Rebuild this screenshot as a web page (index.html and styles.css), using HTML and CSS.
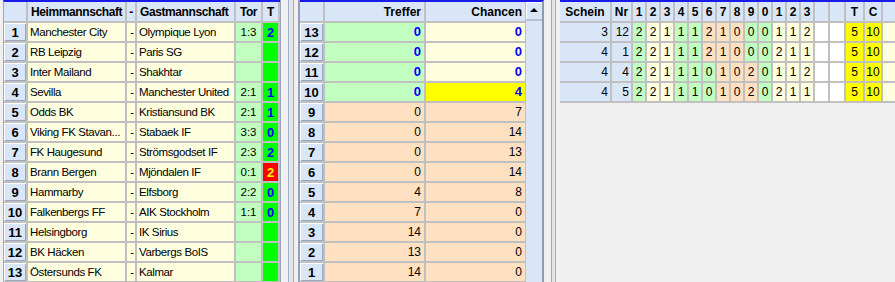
FILE: index.html
```html
<!DOCTYPE html>
<html lang="de">
  <head>
    <meta charset="UTF-8" />
    <title>Toto Auswertung</title>
    <link rel="stylesheet" href="styles.css">
  </head>
  <body>
    <div class="screen">
      <!-- Spielpaarungen -->
      <div class="panel matches">
        <div class="hd"></div><div class="hd left">Heimmannschaft</div><div class="hd mid">-</div><div class="hd left">Gastmannschaft</div><div class="hd mid">Tor</div><div class="hd mid">T</div>

        <div class="num">1</div><div class="team">Manchester City</div><div class="team mid">-</div><div class="team">Olympique Lyon</div><div class="goal">1:3</div><div class="tend">2</div>
        <div class="num">2</div><div class="team">RB Leipzig</div><div class="team mid">-</div><div class="team">Paris SG</div><div class="goal"></div><div class="tend"></div>
        <div class="num">3</div><div class="team">Inter Mailand</div><div class="team mid">-</div><div class="team">Shakhtar</div><div class="goal"></div><div class="tend"></div>
        <div class="num">4</div><div class="team">Sevilla</div><div class="team mid">-</div><div class="team">Manchester United</div><div class="goal">2:1</div><div class="tend">1</div>
        <div class="num">5</div><div class="team">Odds BK</div><div class="team mid">-</div><div class="team">Kristiansund BK</div><div class="goal">2:1</div><div class="tend">1</div>
        <div class="num">6</div><div class="team">Viking FK Stavan...</div><div class="team mid">-</div><div class="team">Stabaek IF</div><div class="goal">3:3</div><div class="tend">0</div>
        <div class="num">7</div><div class="team">FK Haugesund</div><div class="team mid">-</div><div class="team">Strömsgodset IF</div><div class="goal">2:3</div><div class="tend">2</div>
        <div class="num">8</div><div class="team">Brann Bergen</div><div class="team mid">-</div><div class="team">Mjöndalen IF</div><div class="goal">0:1</div><div class="tend alarm">2</div>
        <div class="num">9</div><div class="team">Hammarby</div><div class="team mid">-</div><div class="team">Elfsborg</div><div class="goal">2:2</div><div class="tend">0</div>
        <div class="num">10</div><div class="team">Falkenbergs FF</div><div class="team mid">-</div><div class="team">AIK Stockholm</div><div class="goal">1:1</div><div class="tend">0</div>
        <div class="num">11</div><div class="team">Helsingborg</div><div class="team mid">-</div><div class="team">IK Sirius</div><div class="goal"></div><div class="tend"></div>
        <div class="num">12</div><div class="team">BK Häcken</div><div class="team mid">-</div><div class="team">Varbergs BoIS</div><div class="goal"></div><div class="tend"></div>
        <div class="num">13</div><div class="team">Östersunds FK</div><div class="team mid">-</div><div class="team">Kalmar</div><div class="goal"></div><div class="tend"></div>
      </div>

      <div class="splitter first"></div>

      <!-- Treffer / Chancen -->
      <div class="panel stats-panel">
        <div class="stats">
          <div class="hd"></div><div class="hd right">Treffer</div><div class="hd right">Chancen</div>

          <div class="num">13</div><div class="hit open">0</div><div class="chance open">0</div>
          <div class="num">12</div><div class="hit open">0</div><div class="chance open">0</div>
          <div class="num">11</div><div class="hit open">0</div><div class="chance open">0</div>
          <div class="num">10</div><div class="hit open">0</div><div class="chance open best">4</div>
          <div class="num">9</div><div class="miss">0</div><div class="miss">7</div>
          <div class="num">8</div><div class="miss">0</div><div class="miss">14</div>
          <div class="num">7</div><div class="miss">0</div><div class="miss">13</div>
          <div class="num">6</div><div class="miss">0</div><div class="miss">14</div>
          <div class="num">5</div><div class="miss">4</div><div class="miss">8</div>
          <div class="num">4</div><div class="miss">7</div><div class="miss">0</div>
          <div class="num">3</div><div class="miss">14</div><div class="miss">0</div>
          <div class="num">2</div><div class="miss">13</div><div class="miss">0</div>
          <div class="num">1</div><div class="miss">14</div><div class="miss">0</div>
        </div>
        <div class="scrollbar">
          <div class="scroll-up"><span class="arrow"></span></div>
        </div>
      </div>

      <div class="splitter second"></div>

      <!-- Tippscheine -->
      <div class="panel tips-panel">
        <div class="tips">
          <div class="hd">Schein</div><div class="hd">Nr</div>
          <div class="hd">1</div><div class="hd">2</div><div class="hd">3</div><div class="hd">4</div><div class="hd">5</div><div class="hd">6</div><div class="hd">7</div><div class="hd">8</div><div class="hd">9</div><div class="hd">0</div><div class="hd">1</div><div class="hd">2</div><div class="hd">3</div>
          <div class="hd"></div><div class="hd"></div><div class="hd">T</div><div class="hd">C</div><div class="hd"></div>

          <div class="key">3</div><div class="key">12</div>
          <div class="ok">2</div><div class="wait">2</div><div class="wait">1</div><div class="ok">1</div><div class="ok">1</div><div class="bad">2</div><div class="bad">1</div><div class="bad">0</div><div class="ok">0</div><div class="ok">0</div><div class="wait">1</div><div class="wait">1</div><div class="wait">2</div>
          <div class="blank"></div><div class="blank"></div><div class="sum">5</div><div class="sum">10</div><div class="wait"></div>

          <div class="key">4</div><div class="key">1</div>
          <div class="ok">2</div><div class="wait">2</div><div class="wait">1</div><div class="ok">1</div><div class="ok">1</div><div class="bad">2</div><div class="bad">1</div><div class="bad">0</div><div class="ok">0</div><div class="ok">0</div><div class="wait">2</div><div class="wait">1</div><div class="wait">1</div>
          <div class="blank"></div><div class="blank"></div><div class="sum">5</div><div class="sum">10</div><div class="wait"></div>

          <div class="key">4</div><div class="key">4</div>
          <div class="ok">2</div><div class="wait">2</div><div class="wait">1</div><div class="ok">1</div><div class="ok">1</div><div class="ok">0</div><div class="bad">1</div><div class="bad">0</div><div class="bad">2</div><div class="ok">0</div><div class="wait">1</div><div class="wait">1</div><div class="wait">2</div>
          <div class="blank"></div><div class="blank"></div><div class="sum">5</div><div class="sum">10</div><div class="wait"></div>

          <div class="key">4</div><div class="key">5</div>
          <div class="ok">2</div><div class="wait">2</div><div class="wait">1</div><div class="ok">1</div><div class="ok">1</div><div class="ok">0</div><div class="bad">1</div><div class="bad">0</div><div class="bad">2</div><div class="ok">0</div><div class="wait">2</div><div class="wait">1</div><div class="wait">1</div>
          <div class="blank"></div><div class="blank"></div><div class="sum">5</div><div class="sum">10</div><div class="wait"></div>
        </div>
      </div>
    </div>
  </body>
</html>
```

FILE: styles.css
```css
body {
  margin: 0;
  background: #f0f0f0;
  font-family: "Liberation Sans", Arial, sans-serif;
  font-size: 12px;
  color: #000;
  overflow: hidden;
}

.screen {
  display: flex;
  height: 282px;
}

.panel {
  border-top: 2px solid #1a1aeb;
  flex: none;
}

/* shared grid look */
.matches,
.stats,
.tips {
  display: grid;
  gap: 2px;
  background: #c0c0c0;
  align-content: start;
  grid-template-rows: 19px;
  grid-auto-rows: 18px;
  line-height: 18px;
}

.matches > *,
.stats > *,
.tips > * {
  white-space: nowrap;
  overflow: hidden;
}

.hd {
  background: #d8e6f8;
  font-weight: bold;
  text-align: center;
  line-height: 20px;
}

.left {
  text-align: left;
  padding-left: 3px;
}

.right {
  text-align: right;
  padding-right: 3px;
}

.mid {
  text-align: center;
}

.num {
  background: #d8e6f8;
  font-weight: bold;
  font-size: 13px;
  line-height: 19px;
  text-align: center;
  box-shadow: inset 1px 1px #fff, inset -1px -1px #98a8c0;
}

/* left: matches */
.matches {
  margin-left: 3px;
  border-left: 1px solid #9aa8b8;
  padding-right: 2px;
  grid-template-columns: 22px 97px 8px 97px 25px 15px;
}

.matches .hd {
  letter-spacing: -0.4px;
}

.team {
  background: #ffffe0;
  padding-left: 2px;
  font-size: 11.5px;
  letter-spacing: -0.4px;
}

.goal {
  background: #c0ffc0;
  text-align: center;
  font-size: 11.5px;
}

.tend {
  background: #00ff00;
  color: #0000ff;
  font-weight: bold;
  font-size: 13px;
  line-height: 19px;
  text-align: center;
}

.tend.alarm {
  background: #ff0000;
  color: #ffff00;
}

.splitter {
  flex: none;
}

.splitter.first {
  width: 20px;
  background: linear-gradient(to right, #93a5bd 0 1px, #f0f0f0 1px 8px, #9db1cc 8px 9px, #e4e4e4 9px 13px, #a7a7a7 13px 14px, #f0f0f0 14px 18px, #8fa0b8 18px 20px);
}

.splitter.second {
  width: 16px;
  background: linear-gradient(to right, #f0f0f0 0 7px, #a7a7a7 7px 8px, #e4e4e4 8px 11px, #9db1cc 11px 12px, #f0f0f0 12px 16px);
}

/* middle: hits and chances */
.stats-panel {
  display: flex;
  border-right: 2px solid #8c9cb0;
}

.stats {
  grid-template-columns: 23px 99px 99px;
  padding-right: 1px;
}

.hit,
.chance,
.miss {
  text-align: right;
  padding-right: 3px;
}

.hit.open {
  background: #c0ffc0;
}

.chance.open {
  background: #ffffe0;
}

.open {
  color: #0000ff;
  font-weight: bold;
  font-size: 13px;
}

.chance.best {
  background: #ffff00;
}

.miss {
  background: #ffe0c0;
}

.scrollbar {
  width: 16px;
  background: #d8e6f8;
}

.scroll-up {
  height: 17px;
  border-bottom: 2px solid #b4c2d4;
  box-shadow: inset 1px 1px #fff;
  display: flex;
  justify-content: center;
  align-items: center;
}

.arrow {
  width: 0;
  height: 0;
  border-left: 4px solid transparent;
  border-right: 4px solid transparent;
  border-bottom: 4px solid #000;
  margin-top: -2px;
}

/* right: tip slips */
.tips-panel {
  flex: 1;
}

.tips {
  grid-template-columns: 50px 19px repeat(13, 12px) 13px 14px 17px 16px 1fr;
  padding-bottom: 2px;
}

.key {
  background: #d8e6f8;
  text-align: right;
  padding-right: 2px;
}

.ok,
.wait,
.bad,
.sum {
  text-align: center;
}

.ok {
  background: #c0ffc0;
}

.wait {
  background: #ffffe0;
}

.bad {
  background: #ffe0c0;
}

.blank {
  background: #fff;
}

.sum {
  background: #ffff00;
}
```
